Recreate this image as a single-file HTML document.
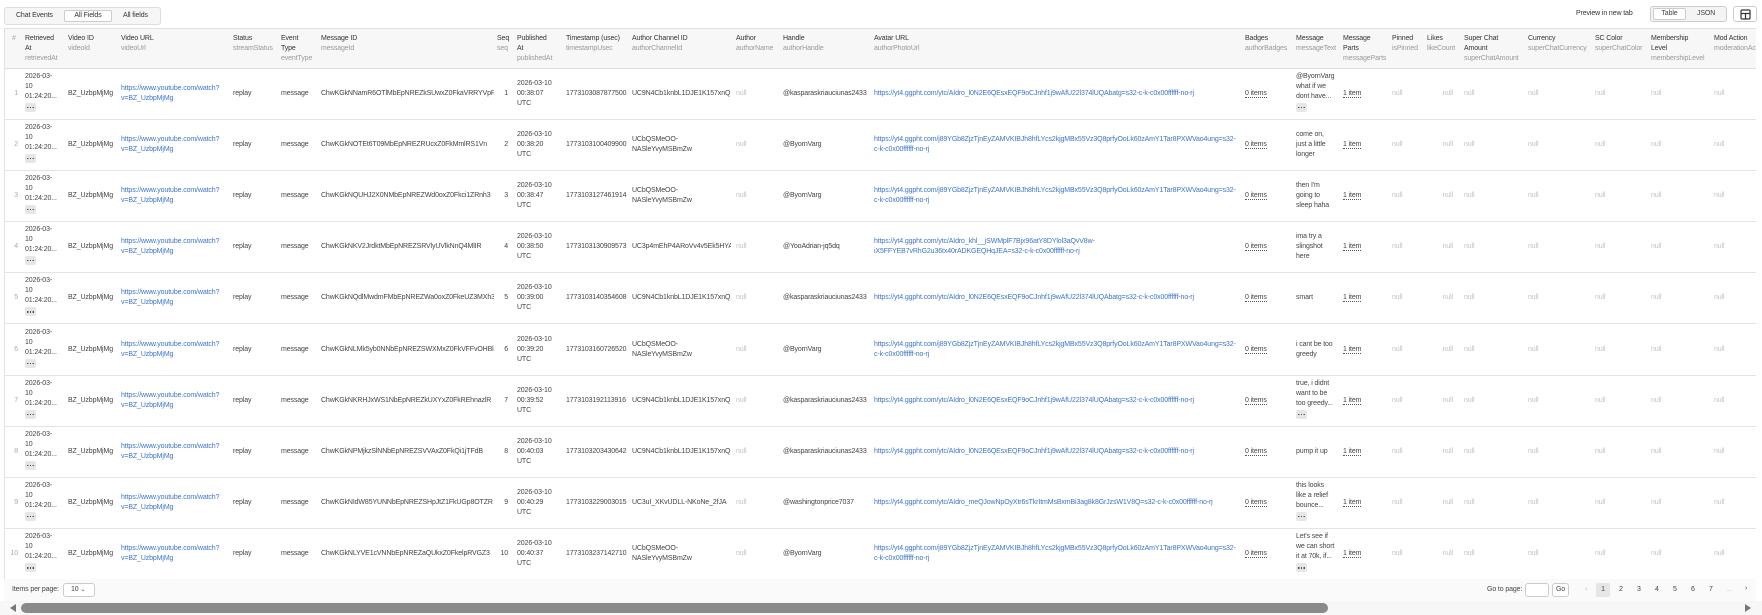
<!DOCTYPE html>
<html><head><meta charset="utf-8"><style>
*{box-sizing:border-box;margin:0;padding:0}
body{width:1762px;height:615px;overflow:hidden;background:#fff;font-family:"Liberation Sans",sans-serif;font-size:7px;letter-spacing:-0.12px;color:#444;position:relative}
.abs{position:absolute}
.tog{left:4px;top:7px;width:157px;height:18px;border:1px solid #ddd;border-radius:3px;background:#f6f6f6}
.tog span{position:absolute;top:4px;color:#333}
.tog .on{left:59px;top:2px;width:48px;height:12px;background:#fff;border:1px solid #ccc;border-radius:2px;text-align:center;line-height:10px}
.wrap{position:absolute;left:4px;top:28px;width:1752px;height:551px;overflow:hidden;border:1px solid #e2e2e2;border-right:none;border-bottom:none}
table{border-collapse:collapse;table-layout:fixed;width:1766px}
th{background:#f7f7f7;height:39px;text-align:left;vertical-align:top;padding:5px 0 0 5px;font-weight:normal;color:#333;line-height:10px;border-bottom:1px solid #ddd;overflow:hidden;white-space:nowrap}
th i{font-style:normal;color:#999;display:block}
td{height:51.2px;vertical-align:middle;padding:0 0 0 5px;line-height:10px;border-bottom:1px solid #e4e4e4;white-space:nowrap;overflow:hidden}
td.n{color:#aaa;text-align:right;padding:0 2px 0 0}
td.s{text-align:right;padding-right:4px}
td.r{text-align:right;padding-right:6px}
.l{color:#3d74c9}
.nl{color:#c2c2c2}
.u{border-bottom:1px dotted #555}
.d{display:inline-block;width:11px;height:9px;background:#e6e6e6;border-radius:2px;position:relative;margin-top:1px}
.d:after{content:"";position:absolute;left:2px;top:4px;width:7px;height:1.3px;background:repeating-linear-gradient(90deg,#555 0 1.3px,transparent 1.3px 2.8px)}
</style></head><body>
<div class="abs tog"><span style="left:11px">Chat Events</span><span class="on">All Fields</span><span style="left:118px">All fields</span></div>
<div class="abs" style="left:1576px;top:10px;color:#333">Preview in new tab</div>
<div class="abs" style="left:1650px;top:6px;width:77px;height:16px;border:1px solid #ccc;border-radius:3px;background:#f4f4f4"><div class="abs" style="left:2px;top:1px;width:33px;height:12px;background:#fff;border:1px solid #ccc;border-radius:2px;text-align:center;line-height:10px">Table</div><div class="abs" style="left:46px;top:3px">JSON</div></div>
<div class="abs" style="left:1733px;top:6px;width:24px;height:16px;border:1px solid #ccc;border-radius:3px"><svg class="abs" style="left:6px;top:2px" width="11" height="11" viewBox="0 0 11 11"><rect x="1" y="1" width="9" height="9" rx="1" fill="none" stroke="#333" stroke-width="1.2"/><path d="M1 4.5h9M5.5 4.5v5.5" stroke="#333" stroke-width="1.2"/></svg></div>
<div class="wrap"><table>
<colgroup><col style="width:15px"><col style="width:43px"><col style="width:53px"><col style="width:112px"><col style="width:48px"><col style="width:40px"><col style="width:178px"><col style="width:18px"><col style="width:49px"><col style="width:66px"><col style="width:104px"><col style="width:47px"><col style="width:91px"><col style="width:371px"><col style="width:51px"><col style="width:47px"><col style="width:49px"><col style="width:35px"><col style="width:37px"><col style="width:64px"><col style="width:67px"><col style="width:56px"><col style="width:63px"><col style="width:62px"></colgroup>
<tr><th style="color:#aaa;padding-left:7px">#</th><th>Retrieved<br>At<i>retrievedAt</i></th><th>Video ID<i>videoId</i></th><th>Video URL<i>videoUrl</i></th><th>Status<i>streamStatus</i></th><th>Event<br>Type<i>eventType</i></th><th>Message ID<i>messageId</i></th><th style="padding-left:3px">Seq<i>seq</i></th><th>Published<br>At<i>publishedAt</i></th><th>Timestamp (usec)<i>timestampUsec</i></th><th>Author Channel ID<i>authorChannelId</i></th><th>Author<i>authorName</i></th><th>Handle<i>authorHandle</i></th><th>Avatar URL<i>authorPhotoUrl</i></th><th>Badges<i>authorBadges</i></th><th>Message<i>messageText</i></th><th>Message<br>Parts<i>messageParts</i></th><th>Pinned<i>isPinned</i></th><th>Likes<i>likeCount</i></th><th>Super Chat<br>Amount<i>superChatAmount</i></th><th>Currency<i>superChatCurrency</i></th><th>SC Color<i>superChatColor</i></th><th>Membership<br>Level<i>membershipLevel</i></th><th>Mod Action<i>moderationAction</i></th></tr>
<tr><td class="n">1</td><td>2026-03-<br>10<br>01:24:20...<br><span class="d"></span></td><td>BZ_UzbpMjMg</td><td class="l">https://www.youtube.com/watch?<br>v=BZ_UzbpMjMg</td><td>replay</td><td>message</td><td>ChwKGkNNamR6OTlMbEpNREZkSUwxZ0FkaVRRYVpR</td><td class="s">1</td><td>2026-03-10<br>00:38:07<br>UTC</td><td>1773103087877500</td><td>UC9N4Cb1knbL1DJE1K157xnQ</td><td class="nl">null</td><td>@kasparaskriauciunas2433</td><td class="l">https://yt4.ggpht.com/ytc/AIdro_l0N2E6QEsxEQF9oCJnhf1j9wAfU22l374lUQAbatg=s32-c-k-c0x00ffffff-no-rj</td><td><span class="u">0 items</span></td><td>@ByornVarg<br>what if we<br>dont have...<br><span class="d"></span></td><td><span class="u">1 item</span></td><td class="nl">null</td><td class="nl r">null</td><td class="nl">null</td><td class="nl">null</td><td class="nl">null</td><td class="nl">null</td><td class="nl">null</td></tr>
<tr><td class="n">2</td><td>2026-03-<br>10<br>01:24:20...<br><span class="d"></span></td><td>BZ_UzbpMjMg</td><td class="l">https://www.youtube.com/watch?<br>v=BZ_UzbpMjMg</td><td>replay</td><td>message</td><td>ChwKGkNOTEt6T09MbEpNREZRUcxZ0FkMmlRS1Vn</td><td class="s">2</td><td>2026-03-10<br>00:38:20<br>UTC</td><td>1773103100409900</td><td>UCbQSMeOO-<br>NASleYvyMSBmZw</td><td class="nl">null</td><td>@ByornVarg</td><td class="l">https://yt4.ggpht.com/j89YGb8ZjzTjnEyZAMVKIBJh8hfLYcs2kjgMBx55Vz3Q8prfyOoLk60zAmY1Tar8PXWVao4ung=s32-<br>c-k-c0x00ffffff-no-rj</td><td><span class="u">0 items</span></td><td>come on,<br>just a little<br>longer</td><td><span class="u">1 item</span></td><td class="nl">null</td><td class="nl r">null</td><td class="nl">null</td><td class="nl">null</td><td class="nl">null</td><td class="nl">null</td><td class="nl">null</td></tr>
<tr><td class="n">3</td><td>2026-03-<br>10<br>01:24:20...<br><span class="d"></span></td><td>BZ_UzbpMjMg</td><td class="l">https://www.youtube.com/watch?<br>v=BZ_UzbpMjMg</td><td>replay</td><td>message</td><td>ChwKGkNQUHJ2X0NMbEpNREZWd0oxZ0Fkci1ZRnh3</td><td class="s">3</td><td>2026-03-10<br>00:38:47<br>UTC</td><td>1773103127461914</td><td>UCbQSMeOO-<br>NASleYvyMSBmZw</td><td class="nl">null</td><td>@ByornVarg</td><td class="l">https://yt4.ggpht.com/j89YGb8ZjzTjnEyZAMVKIBJh8hfLYcs2kjgMBx55Vz3Q8prfyOoLk60zAmY1Tar8PXWVao4ung=s32-<br>c-k-c0x00ffffff-no-rj</td><td><span class="u">0 items</span></td><td>then I'm<br>going to<br>sleep haha</td><td><span class="u">1 item</span></td><td class="nl">null</td><td class="nl r">null</td><td class="nl">null</td><td class="nl">null</td><td class="nl">null</td><td class="nl">null</td><td class="nl">null</td></tr>
<tr><td class="n">4</td><td>2026-03-<br>10<br>01:24:20...<br><span class="d"></span></td><td>BZ_UzbpMjMg</td><td class="l">https://www.youtube.com/watch?<br>v=BZ_UzbpMjMg</td><td>replay</td><td>message</td><td>ChwKGkNKV2JrdktMbEpNREZSRVlyUVlkNnQ4MlIR</td><td class="s">4</td><td>2026-03-10<br>00:38:50<br>UTC</td><td>1773103130909573</td><td>UC3p4mEhP4ARoVv4v5Ek5HYA</td><td class="nl">null</td><td>@YooAdrian-jq5dq</td><td class="l">https://yt4.ggpht.com/ytc/AIdro_khl__jSWMplF7Bjx96atY8DYlol3aQvV8w-<br>iX5FFYEB7vRhG2u36tx40rADKGEQHqJEA=s32-c-k-c0x00ffffff-no-rj</td><td><span class="u">0 items</span></td><td>ima try a<br>slingshot<br>here</td><td><span class="u">1 item</span></td><td class="nl">null</td><td class="nl r">null</td><td class="nl">null</td><td class="nl">null</td><td class="nl">null</td><td class="nl">null</td><td class="nl">null</td></tr>
<tr><td class="n">5</td><td>2026-03-<br>10<br>01:24:20...<br><span class="d"></span></td><td>BZ_UzbpMjMg</td><td class="l">https://www.youtube.com/watch?<br>v=BZ_UzbpMjMg</td><td>replay</td><td>message</td><td>ChwKGkNQdlMwdmFMbEpNREZWa0oxZ0FkeUZ3MXh3</td><td class="s">5</td><td>2026-03-10<br>00:39:00<br>UTC</td><td>1773103140354608</td><td>UC9N4Cb1knbL1DJE1K157xnQ</td><td class="nl">null</td><td>@kasparaskriauciunas2433</td><td class="l">https://yt4.ggpht.com/ytc/AIdro_l0N2E6QEsxEQF9oCJnhf1j9wAfU22l374lUQAbatg=s32-c-k-c0x00ffffff-no-rj</td><td><span class="u">0 items</span></td><td>smart</td><td><span class="u">1 item</span></td><td class="nl">null</td><td class="nl r">null</td><td class="nl">null</td><td class="nl">null</td><td class="nl">null</td><td class="nl">null</td><td class="nl">null</td></tr>
<tr><td class="n">6</td><td>2026-03-<br>10<br>01:24:20...<br><span class="d"></span></td><td>BZ_UzbpMjMg</td><td class="l">https://www.youtube.com/watch?<br>v=BZ_UzbpMjMg</td><td>replay</td><td>message</td><td>ChwKGkNLMk5yb0NNbEpNREZSWXMxZ0FkVFFvOHBl</td><td class="s">6</td><td>2026-03-10<br>00:39:20<br>UTC</td><td>1773103160726520</td><td>UCbQSMeOO-<br>NASleYvyMSBmZw</td><td class="nl">null</td><td>@ByornVarg</td><td class="l">https://yt4.ggpht.com/j89YGb8ZjzTjnEyZAMVKIBJh8hfLYcs2kjgMBx55Vz3Q8prfyOoLk60zAmY1Tar8PXWVao4ung=s32-<br>c-k-c0x00ffffff-no-rj</td><td><span class="u">0 items</span></td><td>i cant be too<br>greedy</td><td><span class="u">1 item</span></td><td class="nl">null</td><td class="nl r">null</td><td class="nl">null</td><td class="nl">null</td><td class="nl">null</td><td class="nl">null</td><td class="nl">null</td></tr>
<tr><td class="n">7</td><td>2026-03-<br>10<br>01:24:20...<br><span class="d"></span></td><td>BZ_UzbpMjMg</td><td class="l">https://www.youtube.com/watch?<br>v=BZ_UzbpMjMg</td><td>replay</td><td>message</td><td>ChwKGkNKRHJxWS1NbEpNREZkUXYxZ0FkREhnazlR</td><td class="s">7</td><td>2026-03-10<br>00:39:52<br>UTC</td><td>1773103192113916</td><td>UC9N4Cb1knbL1DJE1K157xnQ</td><td class="nl">null</td><td>@kasparaskriauciunas2433</td><td class="l">https://yt4.ggpht.com/ytc/AIdro_l0N2E6QEsxEQF9oCJnhf1j9wAfU22l374lUQAbatg=s32-c-k-c0x00ffffff-no-rj</td><td><span class="u">0 items</span></td><td>true, i didnt<br>want to be<br>too greedy...<br><span class="d"></span></td><td><span class="u">1 item</span></td><td class="nl">null</td><td class="nl r">null</td><td class="nl">null</td><td class="nl">null</td><td class="nl">null</td><td class="nl">null</td><td class="nl">null</td></tr>
<tr><td class="n">8</td><td>2026-03-<br>10<br>01:24:20...<br><span class="d"></span></td><td>BZ_UzbpMjMg</td><td class="l">https://www.youtube.com/watch?<br>v=BZ_UzbpMjMg</td><td>replay</td><td>message</td><td>ChwKGkNPMjkzSlNNbEpNREZSVVAxZ0FkQi1jTFdB</td><td class="s">8</td><td>2026-03-10<br>00:40:03<br>UTC</td><td>1773103203430642</td><td>UC9N4Cb1knbL1DJE1K157xnQ</td><td class="nl">null</td><td>@kasparaskriauciunas2433</td><td class="l">https://yt4.ggpht.com/ytc/AIdro_l0N2E6QEsxEQF9oCJnhf1j9wAfU22l374lUQAbatg=s32-c-k-c0x00ffffff-no-rj</td><td><span class="u">0 items</span></td><td>pump it up</td><td><span class="u">1 item</span></td><td class="nl">null</td><td class="nl r">null</td><td class="nl">null</td><td class="nl">null</td><td class="nl">null</td><td class="nl">null</td><td class="nl">null</td></tr>
<tr><td class="n">9</td><td>2026-03-<br>10<br>01:24:20...<br><span class="d"></span></td><td>BZ_UzbpMjMg</td><td class="l">https://www.youtube.com/watch?<br>v=BZ_UzbpMjMg</td><td>replay</td><td>message</td><td>ChwKGkNIdW85YUNNbEpNREZSHpJtZ1FkUGp8OTZR</td><td class="s">9</td><td>2026-03-10<br>00:40:29<br>UTC</td><td>1773103229003015</td><td>UC3uI_XKvUDLL-NKoNe_2fJA</td><td class="nl">null</td><td>@washingtonprice7037</td><td class="l">https://yt4.ggpht.com/ytc/AIdro_meQJowNpOyXtr6sTkrItmMsBxmBi3ag8k8GrJzsW1V8Q=s32-c-k-c0x00ffffff-no-rj</td><td><span class="u">0 items</span></td><td>this looks<br>like a relief<br>bounce...<br><span class="d"></span></td><td><span class="u">1 item</span></td><td class="nl">null</td><td class="nl r">null</td><td class="nl">null</td><td class="nl">null</td><td class="nl">null</td><td class="nl">null</td><td class="nl">null</td></tr>
<tr><td class="n">10</td><td>2026-03-<br>10<br>01:24:20...<br><span class="d"></span></td><td>BZ_UzbpMjMg</td><td class="l">https://www.youtube.com/watch?<br>v=BZ_UzbpMjMg</td><td>replay</td><td>message</td><td>ChwKGkNLYVE1cVNNbEpNREZaQUkxZ0FkelpRVGZ3</td><td class="s">10</td><td>2026-03-10<br>00:40:37<br>UTC</td><td>1773103237142710</td><td>UCbQSMeOO-<br>NASleYvyMSBmZw</td><td class="nl">null</td><td>@ByornVarg</td><td class="l">https://yt4.ggpht.com/j89YGb8ZjzTjnEyZAMVKIBJh8hfLYcs2kjgMBx55Vz3Q8prfyOoLk60zAmY1Tar8PXWVao4ung=s32-<br>c-k-c0x00ffffff-no-rj</td><td><span class="u">0 items</span></td><td>Let's see if<br>we can short<br>it at 70k, if...<br><span class="d"></span></td><td><span class="u">1 item</span></td><td class="nl">null</td><td class="nl r">null</td><td class="nl">null</td><td class="nl">null</td><td class="nl">null</td><td class="nl">null</td><td class="nl">null</td></tr>
</table></div>
<div class="abs" style="left:4px;top:579px;width:1752px;height:22px;background:#fafafa"></div>
<div class="abs" style="left:12px;top:586px;color:#444">Items per page:</div>
<div class="abs" style="left:63px;top:583px;width:32px;height:14px;border:1px solid #ccc;border-radius:3px;background:#fff;padding:2px 0 0 7px">10 <span style="font-size:6px">&#8964;</span></div>
<div class="abs" style="left:1487px;top:586px">Go to page:</div>
<div class="abs" style="left:1525px;top:583px;width:24px;height:14px;border:1px solid #ccc;border-radius:3px;background:#fff"></div>
<div class="abs" style="left:1552px;top:583px;width:17px;height:14px;border:1px solid #ccc;border-radius:3px;background:#fff;text-align:center;line-height:12px">Go</div>
<div class="abs" style="left:1585px;top:586px;color:#bbb">&#8249;</div>
<div class="abs" style="left:1596px;top:583px;width:14px;height:14px;background:#e6e6e6;border-radius:2px;text-align:center;line-height:14px">1</div>
<div class="abs" style="left:1619px;top:586px">2</div><div class="abs" style="left:1637px;top:586px">3</div><div class="abs" style="left:1655px;top:586px">4</div><div class="abs" style="left:1673px;top:586px">5</div><div class="abs" style="left:1691px;top:586px">6</div><div class="abs" style="left:1709px;top:586px">7</div><div class="abs" style="left:1726px;top:586px;color:#bbb">...</div><div class="abs" style="left:1745px;top:585px">&#8250;</div>
<div class="abs" style="left:0;top:601px;width:1762px;height:14px;background:#f7f7f7"></div>
<svg class="abs" style="left:10px;top:604px" width="6" height="8"><path d="M6 0L0 4L6 8z" fill="#777"/></svg>
<div class="abs" style="left:21px;top:603px;width:1307px;height:10px;background:#8a8a8a;border-radius:5px"></div>
<svg class="abs" style="left:1745px;top:604px" width="6" height="8"><path d="M0 0L6 4L0 8z" fill="#777"/></svg>
</body></html>
